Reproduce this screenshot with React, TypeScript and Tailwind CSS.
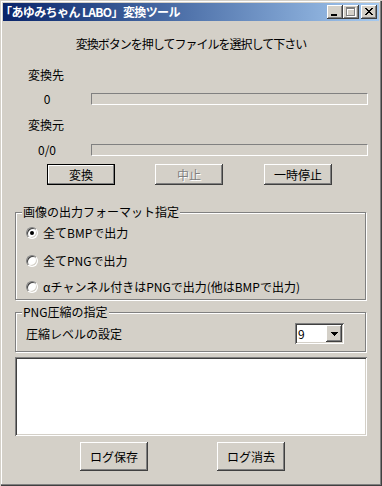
import { FC, ReactNode } from 'react';

// classic win9x bevels
const raised =
  'bg-[#D4D0C8] shadow-[inset_-1px_-1px_0_#404040,inset_1px_1px_0_#fff,inset_-2px_-2px_0_#808080]';

const PixelGlyph: FC<{ rows: string[]; x: number; y: number; color: string }> = ({ rows, x, y, color }) => (
  <>
    {rows.flatMap((r, j) =>
      r.split('').map((c, i) =>
        c === '#' ? <rect key={`${i}-${j}`} x={x + i} y={y + j} width={1} height={1} fill={color} /> : null
      )
    )}
  </>
);

const closeRows = ['##....##', '.##..##.', '..####..', '...##...', '..####..', '.##..##.', '##....##'];

const CaptionButton: FC<{ kind: 'min' | 'max' | 'close'; className?: string }> = ({ kind, className }) => (
  <div className={`w-[16px] h-[14px] ${raised} ${className ?? ''}`}>
    <svg width="16" height="14" shapeRendering="crispEdges">
      {kind === 'min' && <rect x={4} y={9} width={6} height={2} fill="#000" />}
      {kind === 'max' && (
        <>
          <g fill="#fff">
            <rect x={4} y={3} width={9} height={2} />
            <rect x={4} y={3} width={1} height={9} />
            <rect x={12} y={3} width={1} height={9} />
            <rect x={4} y={11} width={9} height={1} />
          </g>
          <g fill="#808080">
            <rect x={3} y={2} width={9} height={2} />
            <rect x={3} y={2} width={1} height={9} />
            <rect x={11} y={2} width={1} height={9} />
            <rect x={3} y={10} width={9} height={1} />
          </g>
        </>
      )}
      {kind === 'close' && <PixelGlyph rows={closeRows} x={4} y={3} color="#000" />}
    </svg>
  </div>
);

const Button: FC<{ children: ReactNode; className?: string; isDefault?: boolean; disabled?: boolean }> = ({
  children,
  className,
  isDefault,
  disabled,
}) => (
  <div
    className={`w-[68px] flex items-center justify-center ${
      isDefault
        ? 'bg-[#D4D0C8] border border-black shadow-[inset_-1px_-1px_0_#808080,inset_1px_1px_0_#fff]'
        : raised
    } ${className ?? ''}`}
  >
    <span className={disabled ? 'text-[#808080] [text-shadow:1px_1px_0_#fff]' : ''}>{children}</span>
  </div>
);

const ProgressBar: FC = () => (
  <div className="w-[277px] h-[12px] border border-t-[#808080] border-l-[#808080] border-b-white border-r-white" />
);

const Radio: FC<{ checked?: boolean; label: string; className?: string }> = ({ checked, label, className }) => (
  <div className={`h-[14px] flex items-center ${className ?? ''}`}>
    <div className="ml-[10px] w-[12px] h-[12px] rounded-full bg-white border border-t-[#808080] border-l-[#808080] border-b-white border-r-white shadow-[inset_1px_1px_0_#404040,inset_-1px_-1px_0_#D4D0C8] flex items-center justify-center">
      {checked && <div className="w-[4px] h-[4px] rounded-full bg-black" />}
    </div>
    <span className="ml-[5px] whitespace-nowrap">{label}</span>
  </div>
);

export default function App() {
  return (
    <div className="w-[382px] h-[486px] bg-[#D4D0C8] flex flex-col text-[12px] leading-[14px] text-black font-['Noto_Sans_CJK_JP','Liberation_Sans',sans-serif] shadow-[inset_1px_1px_0_#D4D0C8,inset_-1px_-1px_0_#404040,inset_-2px_-2px_0_#808080,inset_2px_2px_0_#fff]">
      {/* title bar */}
      <div className="mx-[3px] mt-[3px] h-[18px] flex items-center bg-linear-to-r from-[#0A246A] to-[#A6CAF0]">
        <span className="-ml-[3px] text-white font-bold text-[12px] tracking-[-0.6px] whitespace-nowrap">
          「あゆみちゃん LABO」変換ツール
        </span>
        <div className="flex-1" />
        <CaptionButton kind="min" />
        <CaptionButton kind="max" />
        <CaptionButton kind="close" className="ml-[2px] mr-[2px]" />
      </div>

      <div className="mt-[16px] h-[14px] flex items-center justify-center tracking-[-1px]">
        変換ボタンを押してファイルを選択して下さい
      </div>

      <div className="mt-[17px] h-[14px] ml-[28px] flex items-center">変換先</div>
      <div className="mt-[11px] h-[12px] flex items-center">
        <div className="w-[91px] pl-[3px] text-center">0</div>
        <ProgressBar />
      </div>

      <div className="mt-[13px] h-[14px] ml-[28px] flex items-center">変換元</div>
      <div className="mt-[12px] h-[12px] flex items-center">
        <div className="w-[91px] pl-[3px] text-center">0/0</div>
        <ProgressBar />
      </div>

      <div className="mt-[8px] h-[21px] flex">
        <Button isDefault className="ml-[47px]">変換</Button>
        <Button disabled className="ml-[40px]">中止</Button>
        <Button className="ml-[41px]">一時停止</Button>
      </div>

      <fieldset className="mt-[20px] ml-[15px] w-[351px] h-[95px] border border-[#808080] shadow-[1px_1px_0_#fff,inset_1px_1px_0_#fff]">
        <legend className="ml-[6px] px-[1px] h-[14px] leading-[14px] bg-[#D4D0C8]">画像の出力フォーマット指定</legend>
        <Radio checked label="全てBMPで出力" className="mt-[7px]" />
        <Radio label="全てPNGで出力" className="mt-[14px]" />
        <Radio label="αチャンネル付きはPNGで出力(他はBMPで出力)" className="mt-[12px]" />
      </fieldset>

      <fieldset className="mt-[5px] ml-[15px] w-[351px] h-[47px] border border-[#808080] shadow-[1px_1px_0_#fff,inset_1px_1px_0_#fff]">
        <legend className="ml-[6px] px-[1px] h-[14px] leading-[14px] bg-[#D4D0C8]">PNG圧縮の指定</legend>
        <div className="mt-[4px] h-[21px] flex items-center">
          <span className="ml-[10px]">圧縮レベルの設定</span>
          <div className="flex-1" />
          <div className="mr-[21px] w-[49px] h-[21px] p-[2px] bg-white flex items-center shadow-[inset_1px_1px_0_#808080,inset_-1px_-1px_0_#fff,inset_2px_2px_0_#404040,inset_-2px_-2px_0_#D4D0C8]">
            <span className="flex-1 pl-[1px]">9</span>
            <div className={`w-[16px] h-[17px] ${raised} flex items-center justify-center`}>
              <svg width="7" height="4" shapeRendering="crispEdges">
                <path d="M0 0h7v1h-1v1h-1v1h-1v1h-1v-1h-1v-1h-1v-1h-1z" fill="#000" />
              </svg>
            </div>
          </div>
        </div>
      </fieldset>

      <div className="mt-[5px] ml-[15px] w-[352px] h-[79px] bg-white shadow-[inset_1px_1px_0_#808080,inset_-1px_-1px_0_#fff,inset_2px_2px_0_#404040,inset_-2px_-2px_0_#D4D0C8]" />

      <div className="mt-[6px] h-[29px] flex">
        <Button className="ml-[80px]">ログ保存</Button>
        <Button className="ml-[69px]">ログ消去</Button>
      </div>
    </div>
  );
}
